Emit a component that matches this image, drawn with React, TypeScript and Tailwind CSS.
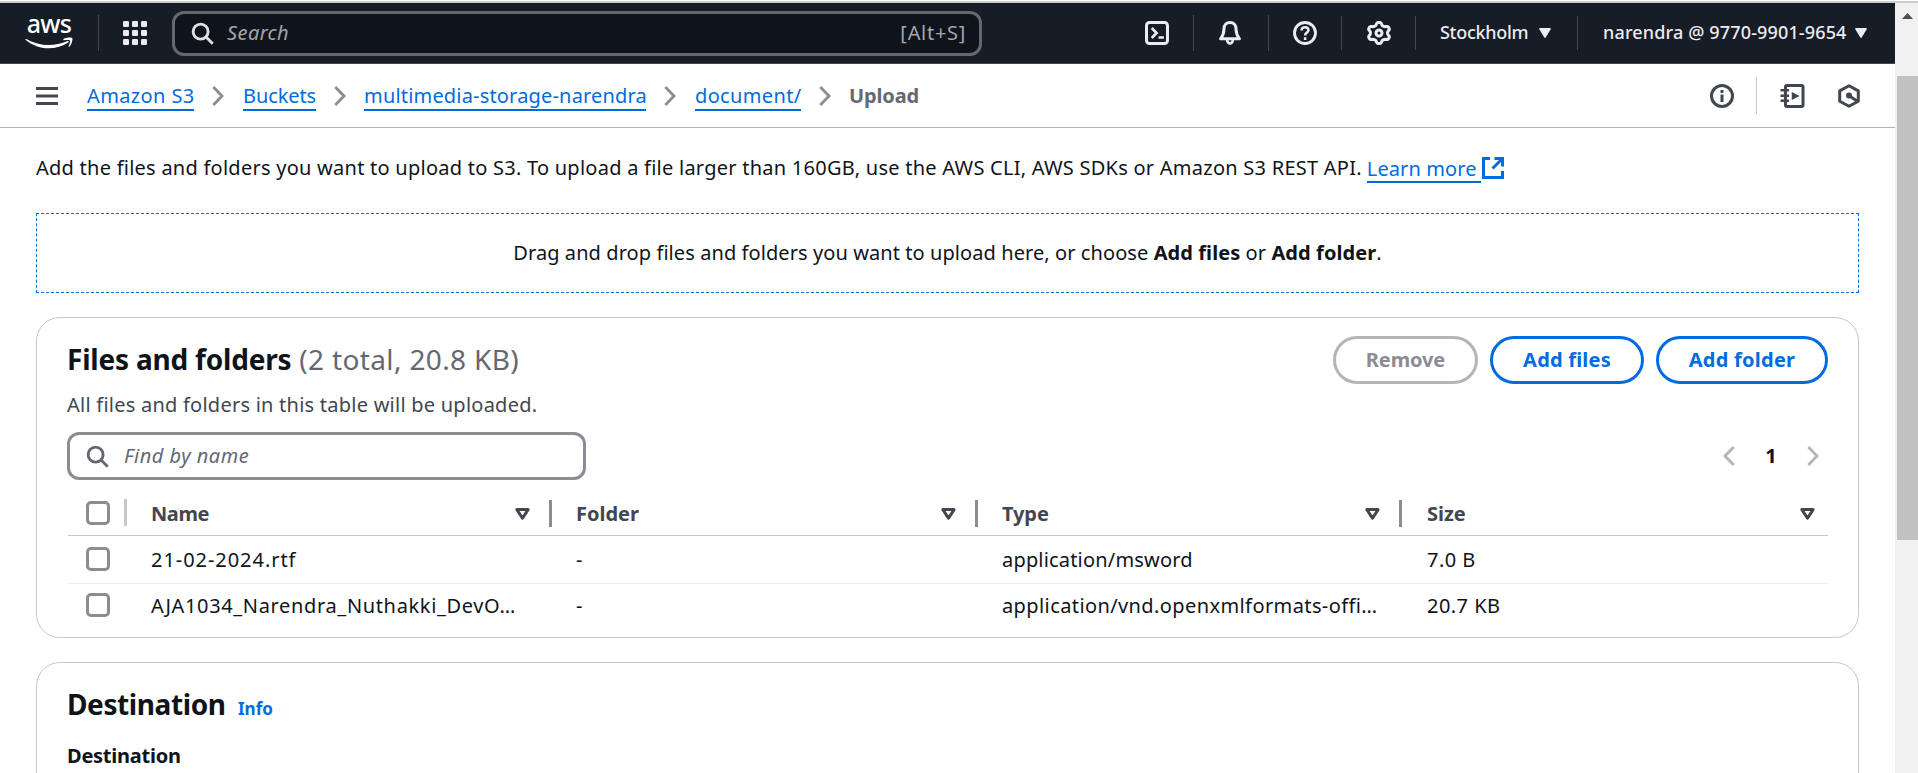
import type { ReactNode } from "react";

function Icon({ children, className = "size-6" }: { children: ReactNode; className?: string }) {
  return (
    <svg viewBox="0 0 16 16" fill="none" stroke="currentColor" strokeWidth={2} className={`shrink-0 ${className}`}>
      {children}
    </svg>
  );
}

function SearchIcon({ className }: { className: string }) {
  return (
    <Icon className={className}>
      <circle cx="6.7" cy="6.7" r="5.2" />
      <path d="m10.5 10.5 4.6 4.6" />
    </Icon>
  );
}

function Caret() {
  return (
    <svg viewBox="0 0 12 10" className="h-[10px] w-3 shrink-0" fill="currentColor">
      <path d="M1 0h10a.8.8 0 0 1 .7 1.3L6.7 9.5a.9.9 0 0 1-1.4 0L.3 1.3A.8.8 0 0 1 1 0Z" />
    </svg>
  );
}

function SortIcon() {
  return (
    <svg viewBox="0 0 15 12" className="h-3 w-[15px] shrink-0" fill="none" stroke="#424650" strokeWidth="3" strokeLinejoin="round">
      <path d="M1.900 1.600h11.200L7.500 10.200Z" />
    </svg>
  );
}

function Chevron({ className, left = false }: { className: string; left?: boolean }) {
  return (
    <svg viewBox="0 0 12 20" className={`h-5 w-3 shrink-0 ${className}`} fill="none" stroke="currentColor" strokeWidth="2.800">
      <path d={left ? "M10.700 1 2 10l8.700 9" : "m1.300 1 8.700 9-8.700 9"} />
    </svg>
  );
}

const gearPath =
  Array.from({ length: 72 }, (_, i) => {
    const a = (i / 72) * Math.PI * 2;
    const wave = Math.tanh(1.8 * Math.cos(6 * a)) / Math.tanh(1.8);
    const r = 6.15 + 0.85 * wave;
    return `${i ? "L" : "M"}${(8 + 1.08 * r * Math.sin(a)).toFixed(2)} ${(8 - r * Math.cos(a)).toFixed(2)}`;
  }).join("") + "Z";

function Divider({ className }: { className: string }) {
  return <span className={`w-px shrink-0 bg-[#424650] ${className}`} />;
}

function TopNav() {
  return (
    <header className="flex h-[61px] shrink-0 items-center border-b border-[#424650] bg-[#161d26] pl-[25px] whitespace-nowrap text-[#ebebf0]">
      <div className="flex h-[34px] w-12 shrink-0 flex-col items-center text-white">
        <span className="-mt-[8px] h-[29px] text-[25px] leading-[30px] font-medium tracking-[-0.7px]">aws</span>
        <svg viewBox="0 0 48 12" className="h-3 w-12 shrink-0" fill="currentColor">
          <path d="M.4 2.300C.7 1.800 1.200 1.900 1.800 2.200 8.500 6 16 8 23.500 8c6.500 0 13-1.400 19-4 1-.4 1.800.7.8 1.400C37.800 9.300 30.500 11.200 23.500 11.200 14.700 11.200 6.800 8 .8 2.900.5 2.700.3 2.500.4 2.300Z" />
          <path d="M38.500 2c2-1.400 7.800-2 8.700-.9.8 1-.3 6.400-2.900 8.700-.5.400-.9.200-.7-.4.800-2 1.800-4.900 1.300-5.700-.6-.8-3.900-.6-5.700-.400-.8.100-1.200-.8-.7-1.300Z" />
        </svg>
      </div>
      <Divider className="ml-[25px] h-9" />
      <svg viewBox="0 0 24 24" className="ml-6 size-6 shrink-0" fill="currentColor">
        {[0, 9, 18].map((y) => [0, 9, 18].map((x) => <rect key={`${x}-${y}`} x={x} y={y} width="6" height="6" rx="1.200" />))}
      </svg>
      <div className="ml-[25px] flex h-[45px] w-[810px] shrink-0 items-center rounded-xl border-3 border-[#656871] bg-[#0f141a] pr-[13px] pl-4 text-xl">
        <SearchIcon className="size-[23px] text-[#dedee3]" />
        <span className="ml-[13px] tracking-[0.4px] text-[#a4a4ad] italic">Search</span>
        <span className="ml-auto tracking-[0.7px] text-[#a4a4ad]">[Alt+S]</span>
      </div>
      <Icon className="ml-[163px] size-6">
        <rect x="1" y="1" width="14" height="14" rx="2" />
        <path d="M4.500 4.700 7.700 8l-3.200 3.300M9 11h3.600" strokeWidth="1.800" />
      </Icon>
      <Divider className="ml-6 h-9" />
      <Icon className="ml-6 size-6">
        <path d="M8 1C5.500 1 4 2.800 4 5.200c0 3.600-.9 4.900-2.300 6.700h12.600C12.900 10.100 12 8.800 12 5.200 12 2.800 10.500 1 8 1Z" strokeLinejoin="round" />
        <path d="M6.100 12.500a1.900 2.400 0 0 0 3.800 0" strokeWidth="1.800" />
      </Icon>
      <Divider className="ml-[26px] h-9" />
      <Icon className="ml-6 size-6">
        <circle cx="8" cy="8" r="7" strokeWidth="1.900" />
        <path d="M5.700 6.300C5.700 4.900 6.700 4.100 8 4.100s2.300.8 2.300 2c0 1.700-2.200 1.600-2.200 3.500M8.100 10.900v1.700" strokeWidth="1.700" />
      </Icon>
      <Divider className="ml-6 h-[34px]" />
      <Icon className="ml-[25px] size-6">
        <path d={gearPath} strokeLinejoin="round" />
        <circle cx="8" cy="8" r="2" />
      </Icon>
      <Divider className="ml-6 h-[34px]" />
      <span className="ml-6 w-[99px] shrink-0 text-lg leading-7 font-medium tracking-[-0.3px] -translate-y-px">Stockholm</span>
      <Caret />
      <Divider className="ml-[26px] h-[34px]" />
      <span className="ml-[25px] w-[252px] shrink-0 text-lg leading-7 font-medium tracking-[0.15px] -translate-y-px">narendra @ 9770-9901-9654</span>
      <Caret />
    </header>
  );
}

function Crumb({ children, className }: { children: ReactNode; className: string }) {
  return (
    <>
      <a className={`h-[30px] shrink-0 border-b-2 border-[#006ce0] text-[#006ce0] leading-[29px] ${className}`}>{children}</a>
      <Chevron className="ml-[18px] text-[#8c8c94]" />
    </>
  );
}

function BreadcrumbBar() {
  return (
    <nav className="flex h-16 shrink-0 items-center border-b border-[#b4b4bb] pl-9 text-xl whitespace-nowrap">
      <svg viewBox="0 0 22 18" className="h-[18px] w-[22px] shrink-0" fill="#424650">
        <path d="M0 0h22v3H0zM0 7.500h22v3H0zM0 15h22v3H0z" />
      </svg>
      <Crumb className="ml-[29px] w-[107px] tracking-[0.38px]">Amazon S3</Crumb>
      <Crumb className="ml-[19px] w-[73px] tracking-[-0.1px]">Buckets</Crumb>
      <Crumb className="ml-[18px] w-[282px] tracking-[0.18px]">multimedia-storage-narendra</Crumb>
      <Crumb className="ml-[19px] w-[106px] tracking-[0.35px]">document/</Crumb>
      <span className="ml-[18px] font-bold tracking-[-0.12px] text-[#656871]">Upload</span>
      <div className="ml-auto flex items-center pr-[34px] text-[#424650]">
        <Icon>
          <circle cx="8" cy="8" r="7" />
          <path d="M8 4v2M8 7v5" />
        </Icon>
        <span className="ml-[22px] h-[37px] w-px bg-[#c6c6cd]" />
        <Icon className="ml-[23px] h-6 w-[25px]">
          <rect x="3.300" y="1" width="11.700" height="14" rx="1" />
          <path d="M0 4.200h5.700M0 7.800h5.700M0 11.200h5.700" strokeWidth="1.700" />
          <path d="M7.500 5.300 12.700 8l-5.200 2.700Z" fill="currentColor" stroke="none" />
        </Icon>
        <Icon className="ml-8 size-6">
          <path d="M8 1.200 14.200 4.600v6.900L8 14.800l-6.200-3.300V4.600Z" strokeLinejoin="round" />
          <circle cx="8" cy="7.700" r="2" fill="currentColor" stroke="none" />
          <path d="m8 7.900 5.600 3.600" />
        </Icon>
      </div>
    </nav>
  );
}

function Checkbox() {
  return <span className="ml-[18px] size-6 shrink-0 rounded-[5px] border-3 border-[#8c8c94] bg-white" />;
}

const columns = [
  { label: "Name", className: "w-[425px] pl-6 tracking-[-0.4px]", sort: "mr-[19px]" },
  { label: "Folder", className: "w-[426px] pl-6", sort: "mr-[19px]" },
  { label: "Type", className: "w-[424px] pl-6 tracking-[-0.1px]", sort: "mr-[19px]" },
  { label: "Size", className: "w-[426px] pl-[25px]", sort: "mr-[13px]" },
];

const files = [
  { name: "21-02-2024.rtf", nameClass: "tracking-[0.95px]", type: "application/msword", typeClass: "tracking-[0.18px]", size: "7.0 B" },
  { name: "AJA1034_Narendra_Nuthakki_DevO…", nameClass: "tracking-[0.65px]", type: "application/vnd.openxmlformats-offi…", typeClass: "tracking-[0.4px]", size: "20.7 KB" },
];

function FilesCard() {
  return (
    <section className="mt-6 h-[321px] rounded-3xl border border-[#c6c6cd] pt-[18px] pr-[30px] pl-[30px]">
      <div className="flex h-12 items-center">
        <h2 className="-mt-[2px] flex text-[28px] leading-9 text-[#656871]">
          <span className="mr-[8px] font-bold tracking-[-0.2px] text-[#0f141a]">Files and folders</span>
          <span className="tracking-[0.350px]">(2 total, 20.8 KB)</span>
        </h2>
        <div className="ml-auto flex gap-3 text-xl font-bold">
          <button className="h-12 w-[145px] rounded-full border-3 border-[#b4b4bb] tracking-[-0.1px] text-[#8c8c94]">Remove</button>
          <button className="h-12 w-[154px] rounded-full border-3 border-[#006ce0] tracking-[0.200px] text-[#006ce0]">Add files</button>
          <button className="h-12 w-[172px] rounded-full border-3 border-[#006ce0] tracking-[0.250px] text-[#006ce0]">Add folder</button>
        </div>
      </div>
      <p className="mt-[6px] h-[30px] leading-[30px] tracking-[0.24px] text-[#424650]">All files and folders in this table will be uploaded.</p>
      <div className="mt-3 flex h-12 items-center">
        <div className="flex h-12 w-[519px] items-center rounded-xl border-3 border-[#8c8c94] pl-4 text-[#656871]">
          <SearchIcon className="size-[23px]" />
          <span className="ml-[15px] tracking-[0.5px] italic">Find by name</span>
        </div>
        <div className="ml-auto flex items-center pr-[9px] text-[#b4b4bb]">
          <Chevron left className="" />
          <span className="w-[72px] text-center font-bold text-[#0f141a]">1</span>
          <Chevron className="" />
        </div>
      </div>
      <div className="mt-[10px] ml-px flex h-[46px] items-center border-b border-[#c6c6cd] font-bold text-[#424650]">
        <div className="flex w-[59px] items-center">
          <Checkbox />
          <span className="ml-auto h-[27px] w-[3px] bg-[#c6c6cd]" />
        </div>
        {columns.map((c, i) => (
          <div key={c.label} className={`flex items-center pt-[2px] ${c.className}`}>
            {c.label}
            <span className={`ml-auto ${c.sort}`}>
              <SortIcon />
            </span>
            {i < 3 && <span className="h-[27px] w-[3px] bg-[#8c8c94]" />}
          </div>
        ))}
      </div>
      {files.map((f, i) => (
        <div key={f.name} className={`ml-px flex items-center ${i === 0 ? "h-12 border-b border-[#ebebf0]" : "h-[43px]"}`}>
          <div className="flex w-[59px] items-center pb-px">
            <Checkbox />
          </div>
          <span className={`w-[425px] pl-6 ${f.nameClass}`}>{f.name}</span>
          <span className="w-[426px] pl-6">-</span>
          <span className={`w-[424px] pl-6 ${f.typeClass}`}>{f.type}</span>
          <span className="w-[426px] pl-[25px] tracking-[0.450px]">{f.size}</span>
        </div>
      ))}
    </section>
  );
}

function DestinationCard() {
  return (
    <section className="mt-6 h-[200px] rounded-3xl border border-[#c6c6cd] pt-[23px] pl-[30px]">
      <div className="flex h-9 items-baseline">
        <h2 className="w-[171px] text-[28px] leading-9 font-bold tracking-[-0.4px]">Destination</h2>
        <a className="text-[17px] font-bold text-[#006ce0]">Info</a>
      </div>
      <p className="mt-[19px] h-[30px] leading-[30px] font-bold tracking-[-0.25px]">Destination</p>
    </section>
  );
}

function Scrollbar() {
  return (
    <div className="h-[770px] w-[23px] shrink-0 bg-[#f1f1f1] pt-[10px] pl-[2px]">
      <svg viewBox="0 0 11 6" className="ml-[5px] h-[6px] w-[11px]" fill="#505050">
        <path d="M5.500 0 11 6H0Z" />
      </svg>
      <div className="mt-[57px] h-[464px] w-full bg-[#c1c1c1]" />
    </div>
  );
}

export default function App() {
  return (
    <div className="h-[773px] w-full overflow-hidden bg-white pt-px font-['Noto_Sans','Open_Sans',sans-serif] text-[#0f141a]">
      <div className="h-[2px] bg-[#cbcdcd]" />
      <div className="flex">
        <div className="flex h-[770px] w-[1895px] flex-col overflow-hidden">
          <TopNav />
          <BreadcrumbBar />
          <main className="shrink-0 px-9 pt-[25px] text-xl whitespace-nowrap">
            <div className="flex h-[30px] items-center">
              <span className="tracking-[0.250px]">
                Add the files and folders you want to upload to S3. To upload a file larger than 160GB, use the AWS CLI, AWS SDKs or Amazon S3 REST API.
              </span>
              <a className="ml-[5px] h-[29px] w-[114px] border-b-2 border-[#006ce0] leading-[29px] tracking-[0.1px] text-[#006ce0]">Learn more</a>
              <svg viewBox="0 0 22 22" className="ml-px h-[22px] w-[22px]" fill="none" stroke="#006ce0" strokeWidth="3">
                <path d="M8 1.500H1.500v19h19V14M12.500 1.500h8v8M20 2l-9.500 9.500" />
              </svg>
            </div>
            <div className="mt-[30px] flex h-20 items-center justify-center border border-dashed border-[#006ce0]">
              <p className="tracking-[0.080px]">
                Drag and drop files and folders you want to upload here, or choose <b>Add files</b> or <b>Add folder</b>.
              </p>
            </div>
            <FilesCard />
            <DestinationCard />
          </main>
        </div>
        <Scrollbar />
      </div>
    </div>
  );
}
